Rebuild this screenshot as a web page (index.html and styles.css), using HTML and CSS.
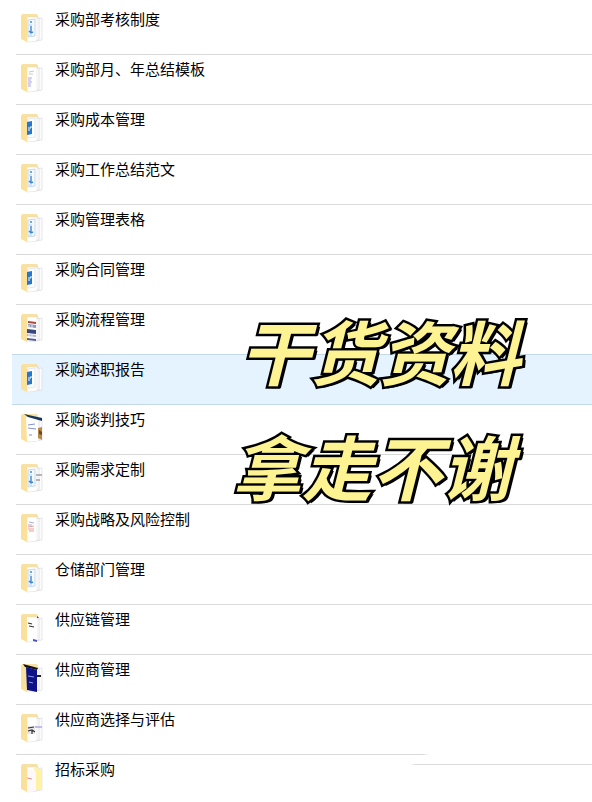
FILE: index.html
```html
<!DOCTYPE html>
<html lang="zh-CN">
<head>
<meta charset="utf-8">
<meta name="viewport" content="width=device-width, initial-scale=1">
<title>采购资料</title>
<link rel="stylesheet" href="styles.css">
</head>
<body>
<svg class="defs" aria-hidden="true">
  <symbol id="folder" viewBox="0 0 24 30">
    <path fill="#f7e1a4" d="M2 1h15l1 2v23H2z"/>
    <path fill="#fcfcfd" stroke="#d6d6dc" stroke-width=".6" d="M14 6l8-1v22l-8 1z"/>
    <path fill="#fff" stroke="#cfd0d4" stroke-width=".6" d="M13 5h6v22l-6 1z"/>
    <path fill="#fff" stroke="#dedace" stroke-width=".5" d="M7 4h10v24l-10 1z"/>
    <path fill="#fbe09a" d="M1 2l6 3v24l-6-3z"/>
  </symbol>
  <symbol id="doc-outline" viewBox="0 0 24 30">
    <path fill="#f5f9fd" stroke="#b5d1ec" stroke-width=".8" d="M8 7l7-1v17l-7 1z"/>
    <path fill="none" stroke="#3c87d6" stroke-width="1.4" d="M11 8v2M11 13v6M9 18l2 2 2-1"/>
    <path fill="none" stroke="#a9c9e9" stroke-width=".8" d="M9 12h3M9 22h3"/>
  </symbol>
  <symbol id="doc-solid" viewBox="0 0 24 30">
    <path fill="none" stroke="#cfdeed" stroke-width=".7" d="M8 6l7-1v19l-7 1z"/>
    <path fill="#2478d0" d="M7 9l5-1v13l-5 1z"/>
    <path fill="none" stroke="#fff" stroke-width="1" d="M8 15h3v-2M8 17h2"/>
  </symbol>
</svg>

<main class="page">
  <ul class="list">
    <li class="row"><svg class="icon"><use href="#folder"/><use href="#doc-outline"/></svg><span class="name">采购部考核制度</span></li>
    <li class="row"><svg class="icon" viewBox="0 0 24 30"><use href="#folder"/><path class="thin" stroke="#c8c8cf" d="M9 9l5-1M9 11h4"/><path class="thin" stroke="#a9a6e8" d="M8 15h4M8 17h3M8 19h4M8 21h3M8 23h3"/></svg><span class="name">采购部月、年总结模板</span></li>
    <li class="row"><svg class="icon"><use href="#folder"/><use href="#doc-solid"/></svg><span class="name">采购成本管理</span></li>
    <li class="row"><svg class="icon"><use href="#folder"/><use href="#doc-outline"/></svg><span class="name">采购工作总结范文</span></li>
    <li class="row"><svg class="icon"><use href="#folder"/><use href="#doc-outline"/></svg><span class="name">采购管理表格</span></li>
    <li class="row"><svg class="icon"><use href="#folder"/><use href="#doc-solid"/></svg><span class="name">采购合同管理</span></li>
    <li class="row"><svg class="icon" viewBox="0 0 24 30"><use href="#folder"/><path fill="#a9483f" d="M8 8l8 1v2l-8-1z"/><path fill="#8f96ba" d="M8 11l8 1v3l-8-1z"/><path fill="#38477e" d="M7 16l9 1v4l-9-1z"/><path fill="#b0b5d4" d="M7 21l9 1v2l-9-1z"/><path fill="#555c99" d="M7 25l9 1v2l-9-1z"/><path class="thin" stroke="#e9edf5" d="M9 12v3M12 12v3M9 20v4M12 21v4"/></svg><span class="name">采购流程管理</span></li>
    <li class="row selected"><svg class="icon"><use href="#folder"/><use href="#doc-solid"/></svg><span class="name">采购述职报告</span></li>
    <li class="row"><svg class="icon" viewBox="0 0 24 30"><use href="#folder"/><path fill="#fff" d="M6 4l12 2v22H7z"/><path fill="#15365f" d="M4 1l18 4v3L8 4z"/><path fill="#b58a4b" d="M18 15l4-1v13l-4-2z"/><path fill="#70481f" d="M19 17l3 2v3l-3-1z"/><path class="thin" stroke="#7f92d4" d="M8 12l7-1M8 15l8 1M9 22h3"/></svg><span class="name">采购谈判技巧</span></li>
    <li class="row"><svg class="icon" viewBox="0 0 24 30"><use href="#folder"/><use href="#doc-outline"/><path class="thin" stroke="#777" d="M16 12h6M16 17h4"/></svg><span class="name">采购需求定制</span></li>
    <li class="row"><svg class="icon" viewBox="0 0 24 30"><use href="#folder"/><path class="thin" stroke="#a2aee0" d="M9 9l5 1M8 12h4"/><path class="thin" stroke="#ed9a9a" d="M8 14l6-1M8 16h6M9 18h5"/></svg><span class="name">采购战略及风险控制</span></li>
    <li class="row"><svg class="icon"><use href="#folder"/><use href="#doc-outline"/></svg><span class="name">仓储部门管理</span></li>
    <li class="row"><svg class="icon" viewBox="0 0 24 30"><use href="#folder"/><path fill="#fff" d="M7 4l10 2v23l-10-2z"/><path fill="none" stroke="#333" stroke-width="1.2" d="M8 10l4 1M9 13l5 1"/><path fill="#4555bd" d="M13 26l4 1v2l-4-1z"/><path fill="#243eab" d="M17 3l2 2h-2z"/></svg><span class="name">供应链管理</span></li>
    <li class="row"><svg class="icon" viewBox="0 0 24 30"><use href="#folder"/><path fill="#111" d="M3 1l15 4-1 2L5 4z"/><path fill="#0c1188" d="M6 4l11 3v22L7 27z"/><path class="thin" stroke="#8c99e8" d="M8 13l6 1M9 19l4 1"/><path fill="none" stroke="#222" stroke-width="2" d="M17 13h4"/></svg><span class="name">供应商管理</span></li>
    <li class="row short-line"><svg class="icon" viewBox="0 0 24 30"><use href="#folder"/><path fill="#e9e7ed" d="M7 13h8v8H7z"/><path fill="none" stroke="#333" stroke-width="1.2" d="M8 15l6-1M8 18l4-1 3 2M12 17v4"/><path class="thin" stroke="#8e83d5" d="M15 14h7"/></svg><span class="name">供应商选择与评估</span></li>
    <li class="row"><svg class="icon" viewBox="0 0 24 30"><use href="#folder"/><path fill="#fff2a2" d="M14 5l8 1v20l-6 1z"/><path fill="#fff8f8" d="M8 6l8 2v20l-9 1z"/><path fill="none" stroke="#e98b8b" stroke-width="1" d="M7 15l5 1"/></svg><span class="name">招标采购</span></li>
  </ul>
  <h1 class="slogan"><span class="line">干货资料</span><span class="line second">拿走不谢</span></h1>
</main>
</body>
</html>
```

FILE: styles.css
```css
* { box-sizing: border-box; }

body {
  margin: 0;
  background: #fff;
  color: #000;
  font-family: "Noto Sans CJK SC", sans-serif;
}

.defs {
  position: absolute;
  width: 0;
  height: 0;
}

.page {
  position: relative;
  overflow: hidden;
}

.list {
  list-style: none;
  margin: 0;
  padding: 5px 0 0 12px;
}

.row {
  position: relative;
  display: flex;
  align-items: flex-start;
  gap: 11px;
  height: 50px;
  padding-left: 8px;
}

.row::after {
  content: "";
  position: absolute;
  left: 4px;
  right: 0;
  bottom: 0;
  height: 1px;
  background: #d9d9d9;
}

.row:last-child::after {
  left: auto;
  bottom: 40px;
  width: 182px;
  background: linear-gradient(90deg, transparent, #d9d9d9 6px);
}

.row.short-line::after {
  right: 163px;
  background: linear-gradient(270deg, transparent, #d9d9d9 6px);
}

.row.selected {
  background: #e5f3ff;
  box-shadow: 0 -1px #c3d9e8;
}

.row.selected::after {
  left: 0;
  background: #c3d9e8;
}

.icon {
  flex: none;
  width: 24px;
  height: 30px;
  margin-top: 8px;
}

.thin {
  fill: none;
  stroke-width: 1;
}

.name {
  padding-top: 4px;
  font-size: 15px;
  line-height: 20px;
}

.slogan {
  position: absolute;
  top: 292px;
  left: 240px;
  margin: 0;
  color: #fdf393;
  font-size: 70px;
  font-style: italic;
  font-weight: 700;
  line-height: 115px;
  white-space: nowrap;
  -webkit-text-stroke: 5px #000;
  paint-order: stroke fill;
  stroke-linejoin: round;
  text-shadow: 3px 2px #000;
}

.line {
  display: block;
}

.second {
  margin-left: -8px;
}
```
